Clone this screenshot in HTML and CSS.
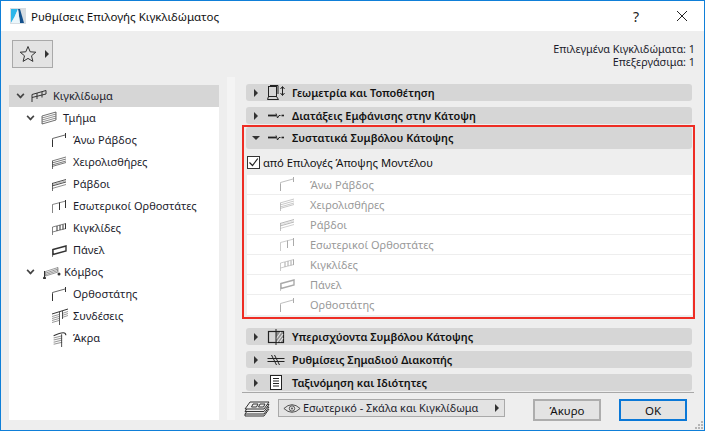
FILE: index.html
```html
<!DOCTYPE html>
<html lang="el">
<head>
<meta charset="utf-8">
<title>Ρυθμίσεις Επιλογής Κιγκλιδώματος</title>
<link rel="stylesheet" href="styles.css">
</head>
<body>
<svg class="sprite" width="0" height="0">
  <defs>
    <symbol id="i-rail" viewBox="0 0 16 14"><path d="M1 13V5.500L15 1.500V5L1 8.500M6 4V10M11 2.800V8.500" fill="none" stroke="currentColor"/></symbol>
    <symbol id="i-section" viewBox="0 0 16 14"><path d="M1 13V5L15 1V9Z" fill="#fff" stroke="currentColor" stroke-opacity=".7"/><path d="M1 7L15 3M1 9L15 5M1 11L15 7" stroke="currentColor" stroke-opacity=".55" fill="none"/></symbol>
    <symbol id="i-top" viewBox="0 0 16 14"><path d="M1.500 14V5.500L14 2" fill="none" stroke="currentColor" stroke-opacity=".75"/><path d="M14.500 0V5" stroke="currentColor"/><path d="M1.500 14V7" stroke="currentColor"/></symbol>
    <symbol id="i-hand" viewBox="0 0 16 14"><path d="M1 6L15 2M1 8L15 4M1 10L15 6M1 11.500L15 7.500" fill="none" stroke="currentColor" stroke-opacity=".65"/><path d="M1.500 14V6" stroke="currentColor" stroke-opacity=".7"/></symbol>
    <symbol id="i-bars" viewBox="0 0 16 14"><path d="M1 6.500L15 2.500M1 9L15 5" fill="none" stroke="currentColor" stroke-opacity=".85"/><path d="M1 7.800L15 3.800" fill="none" stroke="currentColor" stroke-opacity=".35"/><path d="M1 11.500L15 7.500" fill="none" stroke="currentColor" stroke-opacity=".55"/><path d="M1.500 14V6" stroke="currentColor" stroke-opacity=".7"/></symbol>
    <symbol id="i-inner" viewBox="0 0 16 14"><path d="M1.500 14V5.500L15 2" fill="none" stroke="currentColor" stroke-opacity=".6"/><path d="M8.500 3.500V11M14.500 1V9" stroke="currentColor"/></symbol>
    <symbol id="i-grid" viewBox="0 0 16 14"><path d="M1.500 14V6L15 2.500M1.500 11L15 7.500" fill="none" stroke="currentColor" stroke-opacity=".6"/><path d="M6 5V10M9 4V9M12 3.500V8.500M14.500 2.500V8" stroke="currentColor"/></symbol>
    <symbol id="i-panel" viewBox="0 0 16 14"><path d="M2 6.500L15 3V8L2 11.500Z" fill="none" stroke="currentColor" stroke-width="1.400"/><path d="M1.500 14V6" fill="none" stroke="currentColor" stroke-opacity=".6"/></symbol>
    <symbol id="i-node" viewBox="0 0 20 14"><path d="M4.500 6.500L17 2.500V7L4.500 11Z" fill="#fff" stroke="currentColor" stroke-opacity=".5"/><path d="M5 8L17 4M5 9.500L17 5.500" stroke="currentColor" stroke-opacity=".5"/><path d="M3.500 6V12" stroke="currentColor"/><circle cx="3.500" cy="13" r="1.500" fill="currentColor"/><circle cx="18" cy="9" r="1.500" fill="currentColor"/></symbol>
    <symbol id="i-conn" viewBox="0 0 18 17"><path d="M1 6L17 1" stroke="currentColor" fill="none"/><path d="M1 8.500L8 6.500M1 10.500L8 8.500M1 12.500L8 10.500M1 14.500L8 12.500M11 5.500L17 3.500M11 7.500L17 5.500M11 9.500L17 7.500" fill="none" stroke="currentColor" stroke-opacity=".5"/><path d="M8.500 4V17M11.500 3V11" stroke="currentColor" stroke-opacity=".8"/></symbol>
    <symbol id="i-end" viewBox="0 0 14 16"><path d="M1 5.500Q7 2.500 10 2.500Q12.500 2.500 12.500 5" fill="none" stroke="currentColor"/><path d="M1 7.500L9 5.500M1 9.500L9 7.500M1 11.500L9 9.500M1 13.500L9 11.500" fill="none" stroke="currentColor" stroke-opacity=".5"/><path d="M8.500 4V16" stroke="currentColor" stroke-opacity=".8"/></symbol>
    <symbol id="i-geo" viewBox="0 0 18 16"><rect x="1.500" y="1.500" width="8" height="10" fill="none" stroke="currentColor"/><path d="M3 .5H11V9M1.500 11.500L0.500 14.500H11.500L9.500 11.500" fill="none" stroke="currentColor"/><path d="M15.500 2V10M13.500 4L15.500 1.500L17.500 4M13.500 8L15.500 10.500L17.500 8" fill="none" stroke="currentColor"/></symbol>
    <symbol id="i-plan" viewBox="0 0 16 8"><path d="M0 3.500H8" stroke="currentColor" stroke-width="1.800"/><path d="M8 1.500L9.500 6L11 3.500H12.500" stroke="currentColor" fill="none"/><path d="M13.500 3.500H16" stroke="currentColor" stroke-width="1.600"/></symbol>
    <symbol id="i-over" viewBox="0 0 16 16"><rect x=".5" y="2.500" width="15" height="11" fill="none" stroke="currentColor" stroke-width="1.200"/><path d="M8 3H15V13H8Z" fill="#8f8f8f"/><path d="M9 13L15 5M12 13L15 9M8 10L13 3" stroke="#e4e4e4" stroke-width="1.200"/><path d="M8 0V16" stroke="currentColor"/></symbol>
    <symbol id="i-break" viewBox="0 0 17 12"><path d="M0 4.500H17M0 7.500H17" stroke="currentColor"/><path d="M4 1L9 11M7 1L12 11" stroke="currentColor"/></symbol>
    <symbol id="i-doc" viewBox="0 0 12 15"><rect x=".5" y=".5" width="11" height="14" fill="#fff" stroke="currentColor"/><path d="M3 3.500H9M3 6H9M3 8.500H9M3 11H9" stroke="currentColor"/></symbol>
    <symbol id="i-layers" viewBox="0 0 26 18"><path d="M1 14L6 7H25L20 14Z" fill="#eee" stroke="currentColor"/><path d="M1 11.500L6 4.500H25L20 11.500Z" fill="#eee" stroke="currentColor"/><path d="M1 9L6 2H25L20 9Z" fill="#eee" stroke="currentColor"/><path d="M9 4H14L12.500 7H7.500ZM16 4H21L19.500 7H14.500Z" fill="none" stroke="currentColor"/><path d="M1 14V16H20L25 9" fill="none" stroke="currentColor"/></symbol>
  </defs>
</svg>
<div class="window">
  <header class="titlebar">
    <svg class="app-logo" width="16" height="16" viewBox="0 0 16 16"><rect width="16" height="16" fill="#d7dde2"/><path d="M1 15Q5 9 8 1H1Z" fill="#2bb6ea"/><path d="M8 1H10L14 15H10Z" fill="#14518c"/><path d="M1 15Q5 9 8 1L10 15Z" fill="#eaf6fb"/></svg>
    <span class="title">Ρυθμίσεις Επιλογής Κιγκλιδώματος</span>
    <span class="help">?</span>
    <svg class="close" width="12" height="12" viewBox="0 0 12 12"><path d="M1 1L11 11M11 1L1 11" stroke="#222" fill="none"/></svg>
  </header>
  <div class="topbar">
    <button class="fav" type="button">
      <svg width="18" height="18" viewBox="0 0 18 18"><path d="M9 1.500L11.200 6.800L16.800 7.200L12.500 10.800L13.900 16.400L9 13.400L4.100 16.400L5.500 10.800L1.200 7.200L6.800 6.800Z" fill="none" stroke="#333"/></svg>
      <i class="arrow-right"></i>
    </button>
    <div class="info">
      <div>Επιλεγμένα Κιγκλιδώματα: 1</div>
      <div>Επεξεργάσιμα: 1</div>
    </div>
  </div>
  <main class="main">
    <nav class="tree">
      <div class="node lv1 selected"><i class="chev"></i><svg class="ic"><use href="#i-rail"/></svg><span>Κιγκλίδωμα</span></div>
      <div class="node lv2"><i class="chev"></i><svg class="ic"><use href="#i-section"/></svg><span>Τμήμα</span></div>
      <div class="node lv3"><svg class="ic"><use href="#i-top"/></svg><span>Άνω Ράβδος</span></div>
      <div class="node lv3"><svg class="ic"><use href="#i-hand"/></svg><span>Χειρολισθήρες</span></div>
      <div class="node lv3"><svg class="ic"><use href="#i-bars"/></svg><span>Ράβδοι</span></div>
      <div class="node lv3"><svg class="ic"><use href="#i-inner"/></svg><span>Εσωτερικοί Ορθοστάτες</span></div>
      <div class="node lv3"><svg class="ic"><use href="#i-grid"/></svg><span>Κιγκλίδες</span></div>
      <div class="node lv3"><svg class="ic"><use href="#i-panel"/></svg><span>Πάνελ</span></div>
      <div class="node lv2"><i class="chev"></i><svg class="ic ic-node"><use href="#i-node"/></svg><span>Κόμβος</span></div>
      <div class="node lv3"><svg class="ic"><use href="#i-top"/></svg><span>Ορθοστάτης</span></div>
      <div class="node lv3"><svg class="ic ic-tall"><use href="#i-conn"/></svg><span>Συνδέσεις</span></div>
      <div class="node lv3"><svg class="ic ic-tall"><use href="#i-end"/></svg><span>Άκρα</span></div>
    </nav>
    <div class="strip"></div>
    <section class="panel">
      <div class="head"><i class="arrow-right"></i><svg class="hic"><use href="#i-geo"/></svg><b>Γεωμετρία και Τοποθέτηση</b></div>
      <div class="head"><i class="arrow-right"></i><svg class="hic hic-plan"><use href="#i-plan"/></svg><b>Διατάξεις Εμφάνισης στην Κάτοψη</b></div>
      <div class="highlight">
        <div class="head open"><i class="arrow-down"></i><svg class="hic hic-plan"><use href="#i-plan"/></svg><b>Συστατικά Συμβόλου Κάτοψης</b></div>
        <label class="check-row"><span class="check"><svg width="11" height="11" viewBox="0 0 11 11"><path d="M1.500 5.500L4.500 8.500L9.800 1.500" fill="none" stroke="#222" stroke-width="1.200"/></svg></span>από Επιλογές Άποψης Μοντέλου</label>
        <ul class="rows">
          <li><svg class="ic"><use href="#i-top"/></svg>Άνω Ράβδος</li>
          <li><svg class="ic"><use href="#i-hand"/></svg>Χειρολισθήρες</li>
          <li><svg class="ic"><use href="#i-bars"/></svg>Ράβδοι</li>
          <li><svg class="ic"><use href="#i-inner"/></svg>Εσωτερικοί Ορθοστάτες</li>
          <li><svg class="ic"><use href="#i-grid"/></svg>Κιγκλίδες</li>
          <li><svg class="ic"><use href="#i-panel"/></svg>Πάνελ</li>
          <li><svg class="ic"><use href="#i-top"/></svg>Ορθοστάτης</li>
        </ul>
      </div>
      <div class="head after"><i class="arrow-right"></i><svg class="hic"><use href="#i-over"/></svg><b>Υπερισχύοντα Συμβόλου Κάτοψης</b></div>
      <div class="head"><i class="arrow-right"></i><svg class="hic hic-break"><use href="#i-break"/></svg><b>Ρυθμίσεις Σημαδιού Διακοπής</b></div>
      <div class="head"><i class="arrow-right"></i><svg class="hic hic-doc"><use href="#i-doc"/></svg><b>Ταξινόμηση και Ιδιότητες</b></div>
      <footer class="footer">
        <svg class="layers"><use href="#i-layers"/></svg>
        <div class="select">
          <svg width="18" height="11" viewBox="0 0 20 12"><path d="M1 6Q10 -2.500 19 6Q10 14.500 1 6Z" fill="none" stroke="#444"/><circle cx="10" cy="6" r="3" fill="none" stroke="#444"/><circle cx="10" cy="6" r="1" fill="#444"/></svg>
          <span>Εσωτερικό - Σκάλα και Κιγκλίδωμα</span>
          <i class="arrow-right"></i>
        </div>
        <button class="btn cancel" type="button">Άκυρο</button>
        <button class="btn ok" type="button">OK</button>
      </footer>
    </section>
  </main>
  <svg class="grip" width="9" height="9" viewBox="0 0 9 9"><path d="M7 1h2v2H7zM4 4h2v2H4zM7 4h2v2H7zM1 7h2v2H1zM4 7h2v2H4zM7 7h2v2H7z" fill="#b5b5b5"/></svg>
</div>
</body>
</html>
```

FILE: styles.css
```css
* { box-sizing: border-box; }
html, body { margin: 0; padding: 0; }
body { width: 705px; height: 431px; overflow: hidden; font-family: "Noto Sans", "Open Sans", sans-serif; font-size: 11px; color: #1c1c2c; }
.sprite { position: absolute; }
.window { position: relative; width: 705px; height: 431px; border: 1px solid #0f7fd8; background: #eeeeee; display: flex; flex-direction: column; }
.titlebar { height: 30px; flex: none; background: #fff; display: flex; align-items: center; padding-left: 9px; }
.app-logo { flex: none; margin-right: 5px; }
.title { font-size: 11.5px; color: #111; flex: 1; }
.help { font-size: 14px; color: #222; width: 12px; margin-right: 34px; text-align: center; }
.close { margin-right: 16px; }
.topbar { height: 46px; flex: none; display: flex; justify-content: space-between; padding: 9px 9px 0 11px; }
.fav { width: 41px; height: 28px; background: #e3e3e3; border: 1px solid #a9a9a9; padding: 0 0 0 6px; display: flex; align-items: center; gap: 8px; }
.arrow-right { display: block; flex: none; width: 0; height: 0; border-left: 4px solid #333; border-top: 4px solid transparent; border-bottom: 4px solid transparent; }
.arrow-down { display: block; flex: none; width: 0; height: 0; border-top: 4px solid #333; border-left: 4px solid transparent; border-right: 4px solid transparent; }
.info { text-align: right; line-height: 13px; padding-top: 2px; font-size: 10.8px; }
.main { flex: 1; display: flex; align-items: stretch; min-height: 0; padding: 0 9px 10px 8px; }
.tree { width: 210px; flex: none; background: #fff; margin-top: 8px; }
.node { height: 22px; display: flex; align-items: center; font-size: 11px; padding-bottom: 2px; }
.node.selected { background: #d6d6d6; }
.lv1 { padding-left: 8px; }
.lv2 { padding-left: 18px; }
.lv3 { padding-left: 42px; }
.chev { display: block; flex: none; width: 7px; height: 7px; margin-right: 7px; border-right: 2px solid #444; border-bottom: 2px solid #444; transform: translateY(-1px) rotate(45deg) scale(.8); }
.ic { width: 16px; height: 14px; flex: none; margin-right: 6px; color: #333; overflow: visible; transform: translateY(1px); }
.ic-node { width: 20px; margin-right: 3px; }
.ic-tall { width: 18px; height: 17px; margin-right: 4px; }
.strip { width: 8px; flex: none; margin-left: 8px; background: #f4f4f4; }
.panel { width: 453px; flex: none; margin-left: 7px; display: flex; flex-direction: column; padding-top: 7px; }
.head { height: 17px; flex: none; margin: 0 3px 6px 4px; background: #d6d6d6; border-radius: 3px; display: flex; align-items: center; padding-left: 8px; }
.head b { font-weight: 600; font-size: 10.9px; color: #111; padding-bottom: 1px; }
.hic { width: 18px; height: 16px; flex: none; margin: 0 7px 0 9px; color: #222; overflow: visible; }
.hic-plan { width: 16px; height: 8px; margin: 0 8px 0 10px; }
.hic-break { height: 12px; }
.hic-doc { width: 12px; height: 15px; margin: 0 10px 0 12px; }
.highlight { height: 194px; flex: none; margin: -5px 0 0 0; border: 2px solid #ee2d24; padding: 0 1px 0 2px; display: flex; flex-direction: column; }
.head.open { height: 22px; margin: 0; flex: none; padding-left: 6px; }
.head.open .hic { margin-left: 8px; }
.check-row { height: 26px; flex: none; display: flex; align-items: center; padding-left: 1px; font-size: 11.2px; color: #111; gap: 3px; }
.check { width: 13px; height: 13px; background: #fff; border: 1px solid #333; display: flex; align-items: center; justify-content: center; }
.rows { list-style: none; margin: 0; padding: 0; background: #fff; margin-left: 1px; }
.rows li { height: 20px; display: flex; align-items: center; border-bottom: 1px solid #eeeeee; padding-left: 32px; color: #999; font-size: 11px; padding-bottom: 1px; }
.rows li:last-child { border-bottom: 0; }
.rows .ic { color: #aaa; margin-right: 15px; transform: none; }
.head.after { margin-top: 9px; }
.footer { flex: 1; border-top: 1px solid #a8a8a8; display: flex; align-items: flex-start; margin: -5px 1px 0 0; padding-top: 6px; }
.layers { width: 26px; height: 18px; color: #333; margin: 1px 0 0 2px; flex: none; }
.select { width: 227px; height: 18px; margin-left: 8px; background: #e3e3e3; border: 1px solid #a9a9a9; display: flex; align-items: center; padding: 0 5px 0 4px; gap: 2px; }
.select span { flex: 1; font-size: 10.9px; padding-bottom: 1px; }
.btn { width: 68px; height: 22px; background: #e3e3e3; border: 2px solid #adadad; font: inherit; font-size: 11.5px; color: #111; padding: 0; }
.cancel { margin-left: 28px; }
.ok { margin-left: 18px; border-color: #0a78d7; }
.grip { position: absolute; right: 1px; bottom: 1px; }
```
